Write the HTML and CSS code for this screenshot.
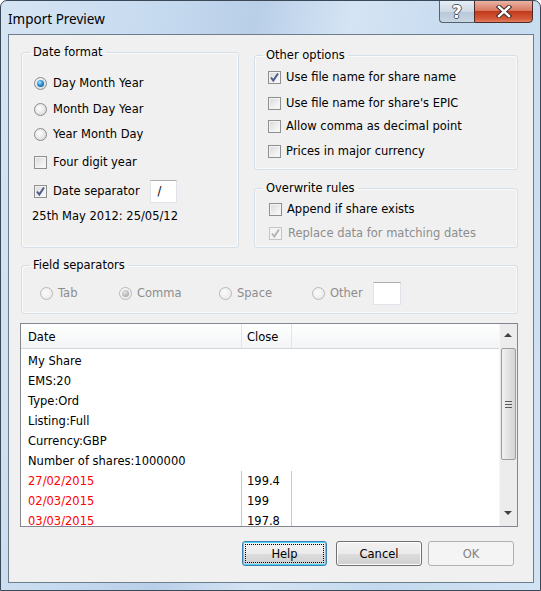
FILE: index.html
```html
<!DOCTYPE html>
<html lang="en">
<head>
    <meta charset="UTF-8">
    <title>Import Preview</title>
    <link rel="stylesheet" href="styles.css">
</head>
<body>
    <div class="window">
        <div class="titlebar">
            <span class="title">Import Preview</span>
            <div class="caption-btns">
                <span class="cap-help">?</span>
                <span class="cap-close">
                    <svg width="16" height="13" viewBox="0 0 16 13">
                        <path d="M3 2 L13 11 M13 2 L3 11" stroke="#3b2a27" stroke-width="4.4" stroke-linecap="square"/>
                        <path d="M3 2 L13 11 M13 2 L3 11" stroke="#fff" stroke-width="2.4" stroke-linecap="square"/>
                    </svg>
                </span>
            </div>
        </div>

        <div class="client">
            <div class="top-row">
                <fieldset class="group date-format">
                    <legend>Date format</legend>
                    <div class="opt r1"><span class="radio checked"></span>Day Month Year</div>
                    <div class="opt r2"><span class="radio"></span>Month Day Year</div>
                    <div class="opt r3"><span class="radio"></span>Year Month Day</div>
                    <div class="opt r4"><span class="check"></span>Four digit year</div>
                    <div class="opt r5">
                        <span class="check checked"><svg width="11" height="11" viewBox="0 0 11 11"><path d="M2 5.5 L4.3 8.5 L9 1.5" fill="none" stroke="#4b5c8c" stroke-width="2"/></svg></span>
                        Date separator
                        <span class="textbox sep">/</span>
                    </div>
                    <div class="sample">25th May 2012: 25/05/12</div>
                </fieldset>

                <div class="right-col">
                    <fieldset class="group other-options">
                        <legend>Other options</legend>
                        <div class="opt o1"><span class="check checked"><svg width="11" height="11" viewBox="0 0 11 11"><path d="M2 5.5 L4.3 8.5 L9 1.5" fill="none" stroke="#4b5c8c" stroke-width="2"/></svg></span>Use file name for share name</div>
                        <div class="opt o2"><span class="check"></span>Use file name for share's EPIC</div>
                        <div class="opt o3"><span class="check"></span>Allow comma as decimal point</div>
                        <div class="opt o4"><span class="check"></span>Prices in major currency</div>
                    </fieldset>

                    <fieldset class="group overwrite">
                        <legend>Overwrite rules</legend>
                        <div class="opt w1"><span class="check"></span>Append if share exists</div>
                        <div class="opt w2 disabled"><span class="check checked disabled"><svg width="11" height="11" viewBox="0 0 11 11"><path d="M2 5.5 L4.3 8.5 L9 1.5" fill="none" stroke="#b4b4b4" stroke-width="2"/></svg></span>Replace data for matching dates</div>
                    </fieldset>
                </div>
            </div>

            <fieldset class="group field-seps">
                <legend>Field separators</legend>
                <div class="sep-row">
                    <div class="opt disabled"><span class="radio disabled"></span>Tab</div>
                    <div class="opt disabled"><span class="radio disabled checked"></span>Comma</div>
                    <div class="opt disabled"><span class="radio disabled"></span>Space</div>
                    <div class="opt disabled"><span class="radio disabled"></span>Other</div>
                    <span class="textbox other-box"></span>
                </div>
            </fieldset>

            <div class="list">
                <div class="list-main">
                    <div class="list-head">
                        <div class="hcell col-date">Date</div>
                        <div class="hcell col-close">Close</div>
                        <div class="hcell col-rest"></div>
                    </div>
                    <div class="list-body">
                        <div class="row meta">My Share</div>
                        <div class="row meta">EMS:20</div>
                        <div class="row meta">Type:Ord</div>
                        <div class="row meta">Listing:Full</div>
                        <div class="row meta">Currency:GBP</div>
                        <div class="row meta">Number of shares:1000000</div>
                        <div class="row"><span class="cell col-date red">27/02/2015</span><span class="cell col-close">199.4</span></div>
                        <div class="row"><span class="cell col-date red">02/03/2015</span><span class="cell col-close">199</span></div>
                        <div class="row"><span class="cell col-date red">03/03/2015</span><span class="cell col-close">197.8</span></div>
                    </div>
                </div>
                <div class="vscroll">
                    <div class="arrow up"></div>
                    <div class="thumb"><span class="grip"></span></div>
                    <div class="track"></div>
                    <div class="arrow down"></div>
                </div>
            </div>

            <div class="buttons">
                <button class="btn focused"><span>Help</span></button>
                <button class="btn">Cancel</button>
                <button class="btn disabled">OK</button>
            </div>
        </div>
    </div>
</body>
</html>
```

FILE: styles.css
```css
body {
    margin: 0;
    font-family: "DejaVu Sans", Tahoma, sans-serif;
    font-size: 11.5px;
    color: #000;
}

.window {
    width: 541px;
    height: 591px;
    box-sizing: border-box;
    border: 1px solid #3a4858;
    border-radius: 7px 7px 0 0;
    background: linear-gradient(100deg, #d6e5f4 0%, #c6daef 25%, #b9cfe8 40%, #d5e4f4 55%, #c4d9ee 75%, #d2e3f4 100%);
    display: flex;
    flex-direction: column;
    overflow: hidden;
}

/* title bar */
.titlebar {
    height: 33px;
    flex: none;
    display: flex;
    justify-content: space-between;
    align-items: flex-start;
    padding: 0 7px 0 7px;
}

.title {
    font-family: "Noto Sans", "Open Sans", sans-serif;
    font-size: 13.5px;
    line-height: 20px;
    margin-top: 8px;
    color: #000;
}

.caption-btns {
    display: flex;
    margin-top: -1px;
}

.cap-help,
.cap-close {
    height: 23px;
    display: flex;
    align-items: center;
    justify-content: center;
    box-sizing: border-box;
}

.cap-help {
    width: 35px;
    border: 1px solid #55636f;
    border-right: none;
    border-radius: 0 0 0 4px;
    background: linear-gradient(#e6edf4, #cdd9e5 50%, #b8c8d8 51%, #c9d6e2);
    color: #fff;
    font-family: "DejaVu Sans", sans-serif;
    font-size: 17px;
    font-weight: bold;
    text-shadow: -1px 0 #4a5866, 1px 0 #4a5866, 0 -1px #4a5866, 0 1px #4a5866;
}

.cap-close {
    width: 59px;
    border: 1px solid #4d2b24;
    border-radius: 0 0 4px 0;
    background: linear-gradient(#eab3a3, #d97a62 45%, #c3391c 50%, #d45a3a 85%, #e08060);
}

/* client area */
.client {
    flex: 1;
    margin: 0 6px 7px 7px;
    border: 1px solid #6e7d8c;
    background: #f0f0f0;
    padding: 10px 15px 0 12px;
    display: flex;
    flex-direction: column;
}

.top-row {
    display: flex;
    gap: 15px;
}

.group {
    margin: 0;
    border: 1px solid #d5dfe5;
    border-radius: 3px;
    box-shadow: inset 0 0 0 1px #fafafa;
    padding: 0;
    min-width: 0;
}

.group legend {
    padding: 0 3px;
    margin-left: 8px;
    line-height: 14px;
}

.opt {
    display: flex;
    align-items: center;
    gap: 5px;
    white-space: nowrap;
}

.opt.disabled {
    color: #8d8d8d;
}

/* date format */
.date-format {
    width: 218px;
    box-sizing: border-box;
    height: 203px;
    padding-top: 11px;
}

.date-format .opt { margin-left: 12px; gap: 6px; }
.date-format .r1,
.date-format .r2 { height: 26px; }
.date-format .r3 { height: 24px; }
.date-format .r4 { height: 32px; }
.date-format .r5 { height: 26px; }

.sample {
    margin: 5px 0 0 10px;
}

.textbox {
    display: inline-block;
    box-sizing: border-box;
    background: #fff;
    border: 1px solid #e2e3ea;
    border-top-color: #abadb3;
}

.textbox.sep {
    width: 27px;
    height: 23px;
    margin-left: 4px;
    padding: 3px 0 0 7px;
}

/* right column */
.right-col {
    width: 264px;
    margin-top: 3px;
    display: flex;
    flex-direction: column;
    gap: 11px;
}

.other-options {
    padding-top: 3px;
    padding-bottom: 6px;
}

.other-options .opt { height: 24px; margin-left: 13px; }
.other-options .o2 { margin-top: 2px; }
.other-options .o3 { margin-top: -1px; }
.other-options .o4 { margin-top: 1px; }

.overwrite {
    padding-top: 2px;
    padding-bottom: 2px;
}

.overwrite .opt { height: 24px; margin-left: 14px; }
.overwrite .w2 { gap: 6px; }

/* field separators */
.field-seps {
    margin-top: 10px;
    padding: 7px 0 6px 0;
}

.sep-row {
    display: grid;
    grid-template-columns: 79px 100px 93px 61px 28px;
    align-items: center;
    height: 28px;
    margin-left: 18px;
}

.sep-row .opt { gap: 5px; }

.other-box {
    width: 28px;
    height: 23px;
}

/* radio and checkbox */
.radio {
    width: 13px;
    height: 13px;
    flex: none;
    box-sizing: border-box;
    border-radius: 50%;
    border: 1px solid #8a8c8e;
    background: radial-gradient(circle at 40% 40%, #fefefe, #e6e6e6 55%, #cdcdcd);
    position: relative;
}

.radio.checked::after {
    content: "";
    position: absolute;
    left: 2px;
    top: 2px;
    width: 7px;
    height: 7px;
    border-radius: 50%;
    background: radial-gradient(circle at 40% 35%, #a8e8ff, #2c8fd8 45%, #0b3f78);
}

.radio.disabled {
    border-color: #b9b9b9;
    background: radial-gradient(circle at 40% 40%, #fbfbfb, #eeeeee 60%, #e2e2e2);
}

.radio.disabled.checked::after {
    background: radial-gradient(circle at 40% 35%, #e6e6e6, #b5b5b5 60%, #9a9a9a);
}

.check {
    width: 13px;
    height: 13px;
    flex: none;
    box-sizing: border-box;
    border: 1px solid #8e8f8f;
    background: linear-gradient(135deg, #d8d8d8, #f7f7f7 80%);
    box-shadow: inset 0 0 0 1px #f4f4f4;
    display: flex;
    align-items: center;
    justify-content: center;
}

.check.disabled {
    border-color: #c4c4c4;
    background: #f4f4f4;
}

/* list view */
.list {
    margin-top: 9px;
    margin-left: -1px;
    height: 204px;
    box-sizing: border-box;
    border: 1px solid #828790;
    background: #fff;
    display: flex;
    overflow: hidden;
}

.list-main {
    flex: 1;
    min-width: 0;
}

.list-head {
    display: flex;
    height: 24px;
    border-bottom: 1px solid #d5d5d5;
    background: linear-gradient(#ffffff, #f3f4f6);
}

.hcell {
    padding-top: 3px;
    line-height: 21px;
    box-sizing: border-box;
    border-right: 1px solid #e3e4e6;
}

.hcell.col-rest { flex: 1; border-right: none; }

.col-date {
    width: 221px;
    padding-left: 7px;
    box-sizing: border-box;
}

.col-close {
    width: 50px;
    padding-left: 5px;
    box-sizing: border-box;
}

.list-body {
    padding-top: 2px;
}

.row {
    display: flex;
    height: 20px;
    line-height: 20px;
}

.row.meta {
    padding-left: 7px;
}

.cell {
    border-right: 1px solid #c8c8c8;
}

.red {
    color: #ff0000;
}

/* scrollbar */
.vscroll {
    width: 17px;
    display: flex;
    flex-direction: column;
    background: #ececec;
    border-left: 1px solid #f6f6f6;
}

.arrow {
    height: 24px;
    flex: none;
    position: relative;
}

.arrow::after {
    content: "";
    position: absolute;
    left: 4px;
    border-left: 4px solid transparent;
    border-right: 4px solid transparent;
}

.arrow.up::after {
    top: 9px;
    border-bottom: 4px solid #404040;
}

.arrow.down::after {
    top: 9px;
    border-top: 4px solid #404040;
}

.thumb {
    height: 112px;
    flex: none;
    margin: 0 1px;
    box-sizing: border-box;
    border: 1px solid #9d9d9d;
    border-radius: 2px;
    background: linear-gradient(90deg, #f2f2f2, #e2e2e2 50%, #d4d4d4);
    display: flex;
    align-items: center;
    justify-content: center;
}

.grip {
    width: 7px;
    height: 7px;
    background: repeating-linear-gradient(#5a5a5a 0 1px, transparent 1px 3px);
}

.track {
    flex: 1;
}

/* buttons */
.buttons {
    display: flex;
    justify-content: flex-end;
    gap: 9px;
    margin-top: 14px;
    padding-right: 4px;
}

.btn {
    width: 86px;
    height: 25px;
    padding: 0;
    font-family: inherit;
    font-size: inherit;
    color: #000;
    border: 1px solid #707070;
    border-radius: 3px;
    background: linear-gradient(#f2f2f2, #ebebeb 50%, #dddddd 51%, #cfcfcf);
    box-shadow: inset 0 0 0 1px #fcfcfc;
}

.btn.focused {
    width: 85px;
    border-color: #3c7fb1;
    box-shadow: inset 0 0 0 1px #48d6fb;
    padding: 2px;
}

.btn.focused span {
    display: flex;
    align-items: center;
    justify-content: center;
    height: 100%;
    border: 1px dotted #000;
    box-sizing: border-box;
}

.btn.disabled {
    margin-left: -3px;
    color: #838383;
    border-color: #adb2b5;
    background: #f4f4f4;
    box-shadow: none;
}
```
